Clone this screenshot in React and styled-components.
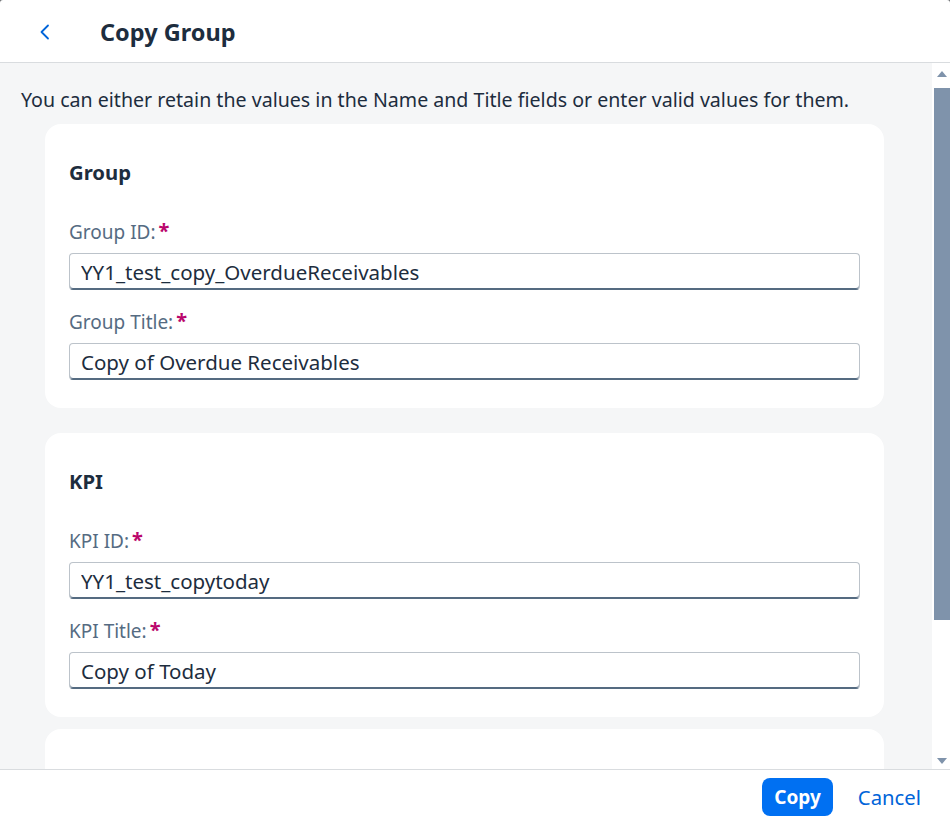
import styled, { createGlobalStyle } from "styled-components"

const GlobalStyle = createGlobalStyle`
    html, body {
        margin: 0;
        padding: 0;
        background: #6a6d70;
    }
    * {
        box-sizing: border-box;
    }
    body {
        font-family: "Noto Sans", "Open Sans", Arial, sans-serif;
        color: #1d2d3e;
    }
`

const Dialog = styled.div`
    display: flex;
    flex-direction: column;
    width: 950px;
    height: 824px;
    background-color: #fff;
    border-radius: 3px 3px 0 0;
    overflow: hidden;
`

const Header = styled.header`
    display: flex;
    align-items: center;
    height: 63px;
    flex-shrink: 0;
    padding-left: 29px;
    border-bottom: solid 1px #d9dcdf;
    box-shadow: 0 1px 2px rgba(0, 0, 0, 0.04);
`

const BackButton = styled.button`
    display: flex;
    align-items: center;
    justify-content: center;
    width: 32px;
    height: 32px;
    padding: 0;
    margin-top: 2px;
    border: none;
    background: transparent;
    color: #0064d9;
    cursor: pointer;
`

const Title = styled.h1`
    margin: 2px 0 0 39px;
    font-size: 23.5px;
    font-weight: 700;
    color: #1d2d3e;
`

const Body = styled.div`
    display: flex;
    flex: 1;
    min-height: 0;
`

const Content = styled.div`
    flex: 1;
    overflow: hidden;
    background-color: #f5f6f7;
    padding: 25px 48px 0 45px;
`

const Intro = styled.p`
    margin: 0 0 12px -24px;
    font-size: 19.6px;
    line-height: 24px;
    color: #1d2d3e;
    white-space: nowrap;
`

const Card = styled.section`
    display: flex;
    flex-direction: column;
    background-color: #fff;
    border-radius: 16px;
    padding: 36px 24px 28px;
    margin-bottom: ${(props) => props.$gap || "25px"};
    min-height: ${(props) => (props.$stub ? "120px" : "auto")};
`

const CardTitle = styled.h2`
    margin: 0 0 36px;
    font-size: 20.3px;
    line-height: 24px;
    font-weight: 700;
    color: #1d2d3e;
`

const Field = styled.div`
    display: flex;
    flex-direction: column;
    margin-top: ${(props) => (props.$first ? "0" : "20px")};
`

const Label = styled.label`
    display: flex;
    align-items: flex-start;
    font-size: 19px;
    line-height: 24px;
    color: #556b82;
    margin-bottom: 9px;
`

const Required = styled.span`
    color: #ba066c;
    font-weight: 700;
    margin-left: 3px;
    font-size: 20px;
    line-height: 22px;
`

const Input = styled.input`
    height: 37px;
    width: 100%;
    padding: 0 11px;
    border: solid 1px #bcc3ca;
    border-bottom-color: #556b81;
    border-radius: 4px;
    font-family: inherit;
    font-size: 20.5px;
    color: #1d2d3e;
    background: #fff;
    box-shadow: inset 0 -1px 0 #556b81;
    outline: none;
`

const Scrollbar = styled.div`
    display: flex;
    flex-direction: column;
    align-items: center;
    width: 18px;
    background-color: #fff;
    padding: 8px 0 5px 2px;
`

const Arrow = styled.div`
    width: 0;
    height: 0;
    border-left: 5px solid transparent;
    border-right: 5px solid transparent;
    border-bottom: ${(props) => (props.$down ? "0" : "6px solid #7f93ab")};
    border-top: ${(props) => (props.$down ? "6px solid #7f93ab" : "0")};
`

const Track = styled.div`
    flex: 1;
    width: 100%;
    padding: 11px 0 10px;
`

const Thumb = styled.div`
    width: 16px;
    height: 532px;
    background-color: #7f93ab;
`

const Footer = styled.footer`
    display: flex;
    align-items: center;
    justify-content: flex-end;
    gap: 13px;
    height: 55px;
    flex-shrink: 0;
    padding-right: 17px;
    border-top: solid 1px #d9dcdf;
`

const Button = styled.button`
    height: 38px;
    padding: 0 12px;
    border: none;
    border-radius: 8px;
    font-family: inherit;
    font-size: ${(props) => (props.$primary ? "19px" : "20.3px")};
    font-weight: ${(props) => (props.$primary ? 700 : 400)};
    color: ${(props) => (props.$primary ? "#fff" : "#0064d9")};
    background-color: ${(props) => (props.$primary ? "#0070f2" : "transparent")};
    cursor: pointer;
`

function FormField({ label, value, first }) {
    return (
        <Field $first={first}>
            <Label>
                {label}
                <Required>*</Required>
            </Label>
            <Input defaultValue={value} />
        </Field>
    )
}

function ChevronLeft() {
    return (
        <svg width="14" height="18" viewBox="0 0 14 18" fill="none">
            <path d="M10 2.5 L3.5 9 L10 15.5" stroke="currentColor" strokeWidth="1.8" strokeLinecap="round" strokeLinejoin="round" />
        </svg>
    )
}

export default function App() {
    return (
        <>
            <GlobalStyle />
            <Dialog>
                <Header>
                    <BackButton aria-label="Back">
                        <ChevronLeft />
                    </BackButton>
                    <Title>Copy Group</Title>
                </Header>

                <Body>
                    <Content>
                        <Intro>
                            You can either retain the values in the Name and Title fields or enter valid values for them.
                        </Intro>

                        <Card>
                            <CardTitle>Group</CardTitle>
                            <FormField first label="Group ID:" value="YY1_test_copy_OverdueReceivables" />
                            <FormField label="Group Title:" value="Copy of Overdue Receivables" />
                        </Card>

                        <Card $gap="12px">
                            <CardTitle>KPI</CardTitle>
                            <FormField first label="KPI ID:" value="YY1_test_copytoday" />
                            <FormField label="KPI Title:" value="Copy of Today" />
                        </Card>

                        <Card $stub />
                    </Content>

                    <Scrollbar>
                        <Arrow />
                        <Track>
                            <Thumb />
                        </Track>
                        <Arrow $down />
                    </Scrollbar>
                </Body>

                <Footer>
                    <Button $primary>Copy</Button>
                    <Button>Cancel</Button>
                </Footer>
            </Dialog>
        </>
    )
}
